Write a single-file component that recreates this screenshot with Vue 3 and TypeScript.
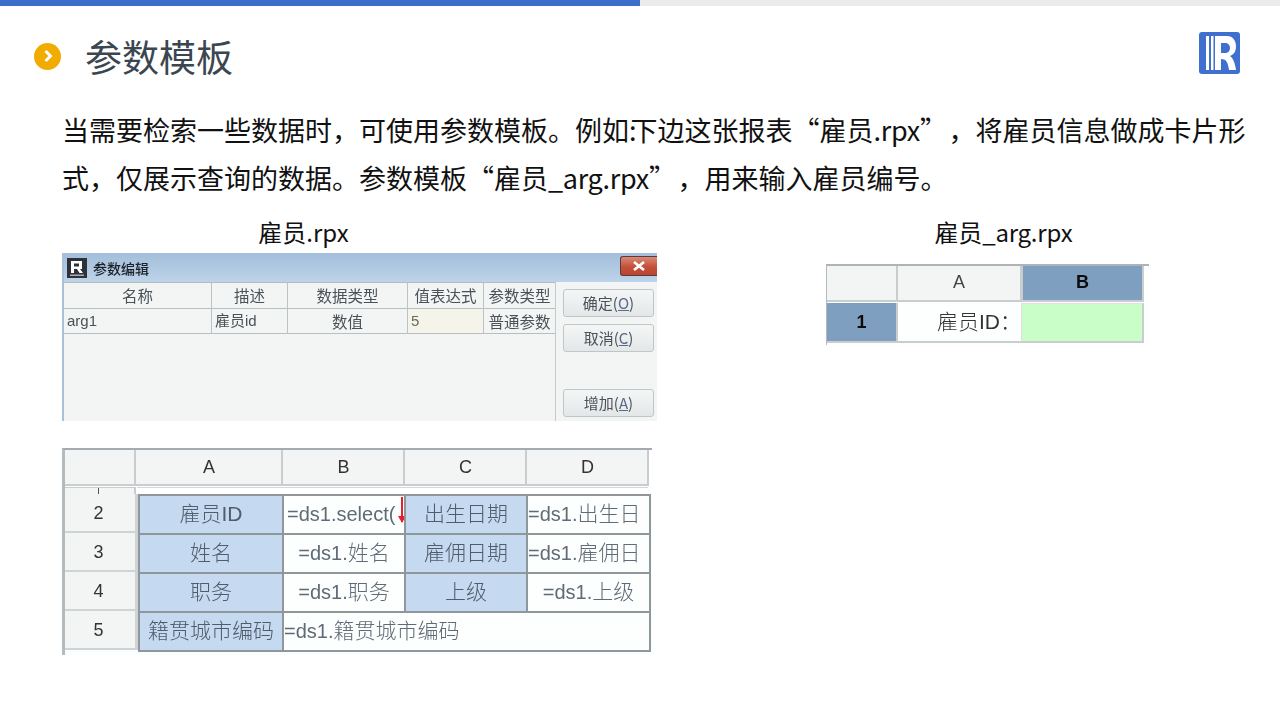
<script setup lang="ts">
const dialogHead = ['名称', '描述', '数据类型', '值表达式', '参数类型']
const columns = ['A', 'B', 'C', 'D']
</script>

<template>
  <div class="slide">
    <div class="progress"><div class="progress-fill"></div></div>

    <header class="head">
      <span class="bullet">
        <svg width="14" height="14" viewBox="0 0 14 14"><path d="M4.5 2 L9.5 7 L4.5 12" fill="none" stroke="#fff" stroke-width="3" /></svg>
      </span>
      <h1 class="title">参数模板</h1>
      <svg class="logo" width="41" height="42" viewBox="0 0 41 42">
        <rect width="41" height="42" rx="3" fill="#3f6fcf" />
        <rect x="7" y="4" width="3" height="34" fill="#fff" />
        <rect x="12" y="4" width="2.5" height="34" fill="#fff" />
        <path fill="#fff" fill-rule="evenodd" d="M16 4 H28 C34 4 37 9 37 14.5 C37 20 34 23 31 24 C34 26 36 31 37 38 H30 C29 30 27 27 22 27 V38 H16 Z M22 11 V21 H26 C29 21 31 19 31 16 C31 13 29 11 26 11 Z" />
      </svg>
    </header>

    <div class="intro">
      <p class="intro-line">当需要检索一些数据时，可使用参数模板。例如<span class="colon">:</span>下边这张报表“雇员<span class="lat">.rpx</span><span class="close-quote">”</span>，将雇员信息做成卡片形</p>
      <p class="intro-line">式，仅展示查询的数据。参数模板“雇员<span class="lat">_arg.rpx</span><span class="close-quote">”</span>，用来输入雇员编号。</p>
    </div>

    <main class="figures">
      <section class="fig-left">
        <div class="caption left-caption">雇员.rpx</div>

        <div class="dialog">
          <div class="titlebar">
            <svg class="app-icon" width="20" height="20" viewBox="0 0 20 20">
              <rect width="20" height="20" fill="#2d3238" />
              <path fill="#fff" fill-rule="evenodd" d="M4 3 H15 V11 H13 L16 15 H12.5 L10 11 H7 V15 H4 Z M7 5.5 V8.5 H12 V5.5 Z" />
              <rect x="3" y="16.5" width="14" height="1.5" fill="#aab" />
            </svg>
            <span class="titlebar-text">参数编辑</span>
            <span class="close">
              <svg width="14" height="10" viewBox="0 0 14 10"><path d="M2 1 L12 9 M12 1 L2 9" stroke="#fff" stroke-width="2.6" /></svg>
            </span>
          </div>
          <div class="dialog-body">
            <div class="param-table">
              <div v-for="h in dialogHead" :key="h" class="pcell phead">{{ h }}</div>
              <div class="pcell pleft">arg1</div>
              <div class="pcell pleft">雇员id</div>
              <div class="pcell">数值</div>
              <div class="pcell pleft pvalue">5</div>
              <div class="pcell">普通参数</div>
            </div>
            <div class="actions">
              <button class="btn">确定(<u>O</u>)</button>
              <button class="btn">取消(<u>C</u>)</button>
              <button class="btn btn-add">增加(<u>A</u>)</button>
            </div>
          </div>
        </div>

        <div class="sheet">
          <div class="sheet-head">
            <div class="shead"></div>
            <div v-for="c in columns" :key="c" class="shead">{{ c }}</div>
          </div>
          <div class="sheet-thin">
            <div class="thin-num"><i></i></div>
            <div class="thin-cell"></div>
          </div>
          <div class="sheet-rows">
            <div class="rownum">2</div>
            <div class="cell blue">雇员ID</div>
            <div class="cell formula fleft select">=ds1.select(<span class="arrow"></span></div>
            <div class="cell blue wide">出生日期</div>
            <div class="cell formula fedge">=ds1.<span class="zh">出生日</span></div>

            <div class="rownum">3</div>
            <div class="cell blue">姓名</div>
            <div class="cell formula">=ds1.<span class="zh">姓名</span></div>
            <div class="cell blue wide">雇佣日期</div>
            <div class="cell formula fedge">=ds1.<span class="zh">雇佣日</span></div>

            <div class="rownum">4</div>
            <div class="cell blue">职务</div>
            <div class="cell formula">=ds1.<span class="zh">职务</span></div>
            <div class="cell blue">上级</div>
            <div class="cell formula">=ds1.<span class="zh">上级</span></div>

            <div class="rownum">5</div>
            <div class="cell blue wide">籍贯城市编码</div>
            <div class="cell formula fedge span3">=ds1.<span class="zh">籍贯城市编码</span></div>
          </div>
        </div>
      </section>

      <section class="fig-right">
        <div class="caption right-caption">雇员_arg.rpx</div>
        <div class="arg-sheet">
          <div class="arg-grid">
            <div class="arg-head"></div>
            <div class="arg-head">A</div>
            <div class="arg-head active">B</div>
            <div class="arg-num">1</div>
            <div class="arg-label">雇员ID：</div>
            <div class="arg-input"></div>
          </div>
        </div>
      </section>
    </main>
  </div>
</template>

<style>
html, body { margin: 0; background: #fff; }
</style>

<style scoped>
.slide {
  width: 1280px;
  height: 720px;
  overflow: hidden;
  background: #fff;
  font-family: "Noto Sans CJK SC", "Noto Sans", sans-serif;
  color: #333f48;
}
.progress { height: 6px; background: #ebebeb; }
.progress-fill { width: 640px; height: 6px; background: #3c6fc9; }

.head {
  display: flex;
  align-items: center;
  height: 100px;
  padding: 0 40px 0 34px;
}
.bullet {
  width: 27px;
  height: 27px;
  border-radius: 50%;
  background: #f2ab00;
  display: flex;
  align-items: center;
  justify-content: center;
  flex: none;
}
.title {
  margin: 0 0 0 24px;
  font-size: 37px;
  font-weight: 400;
  line-height: 1;
  color: #3a4650;
  flex: 1;
}
.logo { flex: none; margin-bottom: 6px; }

.intro { margin-left: 62px; }
.intro-line {
  margin: 0;
  font-size: 27px;
  line-height: 48px;
  color: #111;
  font-weight: 400;
  white-space: nowrap;
}
.colon { letter-spacing: -6px; }
.lat { letter-spacing: -0.3px; }
.close-quote { letter-spacing: 15px; }

.figures {
  display: flex;
  margin-top: 14px;
  padding-left: 62px;
}
.fig-left { width: 595px; flex: none; }
.fig-right { width: 324px; margin-left: 169px; }

.caption {
  font-size: 24px;
  line-height: 32px;
  height: 32px;
  text-align: center;
  color: #111;
}
.left-caption { width: 483px; }
.right-caption { margin-left: 31px; letter-spacing: -0.2px; }

/* dialog */
.dialog {
  height: 168px;
  margin-top: 5px;
  background: #f3f5f4;
  border-left: 2px solid #a8c0da;
  box-sizing: border-box;
  filter: blur(0.4px);
}
.titlebar {
  height: 29px;
  display: flex;
  align-items: center;
  padding-left: 3px;
  background: linear-gradient(#a3bedb, #bdd3e8);
}
.app-icon { flex: none; }
.titlebar-text {
  margin-left: 6px;
  font-size: 14px;
  font-weight: 500;
  color: #1d2228;
  flex: 1;
}
.close {
  width: 37px;
  height: 20px;
  margin-bottom: 4px;
  box-sizing: border-box;
  border: 1px solid #5a3a3a;
  border-right: 0;
  border-radius: 3px 0 0 3px;
  background: linear-gradient(#d98a78, #c4503a 55%, #b9442f);
  display: flex;
  align-items: center;
  justify-content: center;
}
.dialog-body { display: flex; height: 139px; }
.param-table {
  width: 492px;
  flex: none;
  align-self: stretch;
  display: grid;
  grid-template-columns: 148px 76px 120px 76px 71px;
  grid-template-rows: 26px 25px;
  align-content: start;
  border-top: 1px solid #b4bcbf;
  border-right: 1px solid #c4c9ca;
  box-sizing: border-box;
}
.pcell {
  box-sizing: border-box;
  border-right: 1px solid #bcc3c5;
  border-bottom: 1px solid #b8bfc1;
  font-size: 15.5px;
  line-height: 24px;
  text-align: center;
  color: #4a5258;
  white-space: nowrap;
}
.pcell:nth-child(5n) { border-right: 0; }
.pleft { text-align: left; padding-left: 3px; font-family: "Liberation Sans", "Noto Sans CJK SC", sans-serif; font-size: 15px; }
.pvalue { background: #f5f4ea; color: #6a6a5a; }
.actions {
  display: flex;
  flex-direction: column;
  padding: 7px 0 0 7px;
  gap: 7px;
}
.btn {
  width: 91px;
  height: 28px;
  padding: 0 0 2px;
  border: 1px solid #c0c6c8;
  border-radius: 3px;
  background: linear-gradient(#f4f6f6, #e4e7e8);
  font-family: "Noto Sans CJK SC", sans-serif;
  font-size: 15px;
  color: #4a5258;
}
.btn u { color: #5a6a8a; }
.btn-add { margin-top: 30px; }

/* main sheet */
.sheet {
  margin-top: 27px;
  width: 590px;
  height: 207px;
  box-sizing: border-box;
  border-left: 3px solid #b4bbbf;
  border-top: 2px solid #a4abb0;
  background: #fbfefe;
  font-family: "Liberation Sans", "Noto Sans CJK SC", sans-serif;
  filter: blur(0.4px);
}
.sheet-head {
  display: grid;
  grid-template-columns: 71px 147px 122px 122px 122px;
  height: 36px;
  background: #fff;
}
.shead {
  background: #f3f5f4;
  border-right: 2px solid #c9cdcd;
  border-bottom: 2px solid #c9cdcd;
  box-sizing: border-box;
  text-align: center;
  font-size: 18px;
  line-height: 34px;
  color: #333;
  padding-left: 1px;
}
.sheet-thin {
  display: grid;
  grid-template-columns: 71px 512px;
  height: 7px;
  margin-top: 1px;
  background: #fff;
}
.thin-num {
  background: #f3f5f4;
  border-top: 1px solid #c9cdcd;
  border-right: 2px solid #c9cdcd;
  box-sizing: border-box;
  position: relative;
}
.thin-num i {
  position: absolute;
  left: 33px;
  top: 0;
  width: 1px;
  height: 6px;
  background: #555;
}
.thin-cell { border-top: 1px solid #d5d8d8; background: #fff; margin-left: 1px; }
.sheet-rows {
  display: grid;
  grid-template-columns: 73px 144px 122px 122px 123px;
  grid-template-rows: repeat(4, 39px);
  width: 584px;
}
.rownum {
  background: #f3f5f4;
  border-right: 3px solid #d0d3d3;
  border-bottom: 2px solid #d0d3d3;
  box-sizing: border-box;
  text-align: center;
  font-size: 18px;
  line-height: 38px;
  color: #333;
  padding-right: 3px;
}
.cell {
  box-sizing: border-box;
  border: 2px solid #8f979b;
  margin: 0 -2px -2px 0;
  font-size: 20px;
  line-height: 36px;
  text-align: center;
  white-space: nowrap;
  overflow: hidden;
  color: #4f5d6a;
  background: #fcfffe;
}
.blue { background: #c5d9f1; font-size: 21px; font-weight: 300; }
.formula { color: #5f6b76; }
.zh { font-size: 21px; font-weight: 300; }
.fleft { text-align: left; padding-left: 3px; }
.fedge { text-align: left; padding-left: 0; }
.select { position: relative; }
.arrow {
  position: absolute;
  right: 1px;
  top: 1px;
  width: 2px;
  height: 25px;
  background: #e8202a;
}
.arrow::after {
  content: "";
  position: absolute;
  left: -3px;
  bottom: -1px;
  border-left: 4px solid transparent;
  border-right: 4px solid transparent;
  border-top: 7px solid #e8202a;
}
.span3 { grid-column: span 3; }

/* arg sheet */
.arg-sheet {
  margin-top: 16px;
  width: 323px;
  height: 81px;
  box-sizing: border-box;
  border-top: 2px solid #adb3b6;
  border-left: 1px solid #b4bbbf;
  background: #fcfefe;
  font-family: "Liberation Sans", "Noto Sans CJK SC", sans-serif;
  filter: blur(0.4px);
}
.arg-grid {
  display: grid;
  grid-template-columns: 71px 124px 122px;
  grid-template-rows: 36px 40px;
  row-gap: 1px;
}
.arg-head {
  background: #f3f5f4;
  border-right: 2px solid #c9cdcd;
  border-bottom: 2px solid #c9cdcd;
  box-sizing: border-box;
  text-align: center;
  font-size: 18px;
  line-height: 33px;
  color: #444;
}
.active {
  background: #7f9fc0;
  border-left: 1px solid #c9cdcd;
  font-weight: 700;
  color: #0c0c0c;
}
.arg-num {
  background: #7f9fc0;
  border-right: 2px solid #c9cdcd;
  border-bottom: 2px solid #c9cdcd;
  box-sizing: border-box;
  text-align: center;
  font-size: 18px;
  font-weight: 700;
  line-height: 38px;
  color: #0c0c0c;
}
.arg-label {
  background: #fdfffe;
  border-right: 1px solid #e8d8ea;
  border-bottom: 2px solid #c9cdcd;
  box-sizing: border-box;
  text-align: right;
  font-size: 21px;
  font-weight: 300;
  line-height: 38px;
  color: #333;
}
.arg-input {
  background: #c9fec9;
  border-top: 1px solid #ecd9ea;
  border-right: 2px solid #c9cdcd;
  border-bottom: 2px solid #c9cdcd;
  box-sizing: border-box;
}
</style>
